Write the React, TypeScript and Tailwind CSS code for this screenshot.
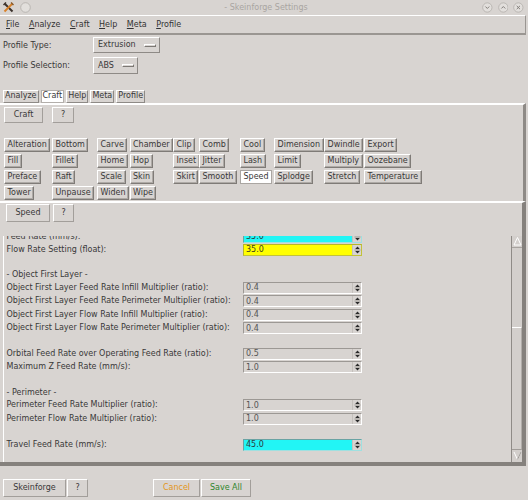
import React from "react";

type Row = {
  label?: string;
  value?: string;
  tone?: "cyan" | "yellow";
  kind: "entry" | "blank" | "heading";
};

const craftRows: string[][] = [
  ["Alteration", "Bottom", "Carve", "Chamber", "Clip", "Comb", "Cool", "Dimension", "Dwindle", "Export"],
  ["Fill", "Fillet", "Home", "Hop", "Inset", "Jitter", "Lash", "Limit", "Multiply", "Oozebane"],
  ["Preface", "Raft", "Scale", "Skin", "Skirt", "Smooth", "Speed", "Splodge", "Stretch", "Temperature"],
  ["Tower", "Unpause", "Widen", "Wipe"],
];

const rows: Row[] = [
  { kind: "entry", label: "Feed Rate (mm/s):", value: "35.0", tone: "cyan" },
  { kind: "entry", label: "Flow Rate Setting (float):", value: "35.0", tone: "yellow" },
  { kind: "blank" },
  { kind: "heading", label: "- Object First Layer -" },
  { kind: "entry", label: "Object First Layer Feed Rate Infill Multiplier (ratio):", value: "0.4" },
  { kind: "entry", label: "Object First Layer Feed Rate Perimeter Multiplier (ratio):", value: "0.4" },
  { kind: "entry", label: "Object First Layer Flow Rate Infill Multiplier (ratio):", value: "0.4" },
  { kind: "entry", label: "Object First Layer Flow Rate Perimeter Multiplier (ratio):", value: "0.4" },
  { kind: "blank" },
  { kind: "entry", label: "Orbital Feed Rate over Operating Feed Rate (ratio):", value: "0.5" },
  { kind: "entry", label: "Maximum Z Feed Rate (mm/s):", value: "1.0" },
  { kind: "blank" },
  { kind: "heading", label: "- Perimeter -" },
  { kind: "entry", label: "Perimeter Feed Rate Multiplier (ratio):", value: "1.0" },
  { kind: "entry", label: "Perimeter Flow Rate Multiplier (ratio):", value: "1.0" },
  { kind: "blank" },
  { kind: "entry", label: "Travel Feed Rate (mm/s):", value: "45.0", tone: "cyan" },
];

function ToolIcon() {
  return (
    <svg width="11" height="11" viewBox="0 0 11 11">
      <path d="M2 2 L9.5 9.5" stroke="#3a302a" strokeWidth="2" />
      <path d="M9 2 L1.5 9.5" stroke="#d9822b" strokeWidth="2" />
      <path d="M0.5 3 L3 0.5" stroke="#3a302a" strokeWidth="1.5" />
      <path d="M8 0.5 L10.5 3" stroke="#8a5a2a" strokeWidth="1.5" />
    </svg>
  );
}

function WinDot({ glyph }: { glyph?: "min" | "max" | "close" }) {
  return (
    <svg width="11" height="11" viewBox="0 0 11 11">
      <circle cx="5.5" cy="5.5" r="4.8" fill="#e2dfdc" stroke="#b1ada9" strokeWidth="0.8" />
      {glyph === "min" && <path d="M3.5 4.5 L5.5 6.5 L7.5 4.5" stroke="#807c78" strokeWidth="1" fill="none" />}
      {glyph === "max" && <path d="M3.5 6.5 L5.5 4.5 L7.5 6.5" stroke="#807c78" strokeWidth="1" fill="none" />}
      {glyph === "close" && <path d="M3.8 3.8 L7.2 7.2 M7.2 3.8 L3.8 7.2" stroke="#807c78" strokeWidth="1" />}
    </svg>
  );
}

function Spin() {
  return (
    <div className="w-[9px] h-full border-l border-l-[#c4c0bc] bg-[#d8d4d1] flex items-center justify-center shrink-0">
      <svg width="7" height="10" viewBox="0 0 7 10">
        <path d="M1.2 4 L3.5 1.6 L5.8 4 Z" fill="#2a2a2a" />
        <path d="M0.5 5 H6.5" stroke="#8a8682" strokeWidth="0.8" />
        <path d="M1.2 6 L5.8 6 L3.5 8.4 Z" fill="#2a2a2a" />
      </svg>
    </div>
  );
}

function Entry({ value, tone }: { value: string; tone?: "cyan" | "yellow" }) {
  let box = "bg-[#d8d4d1] border-t-[#9c9894] border-l-[#9c9894] border-b-white border-r-white text-[#555]";
  if (tone === "cyan") box = "bg-[#22f5f5] border-t-[#6aa3a3] border-l-[#6aa3a3] border-b-[#9fe0e0] border-r-[#9fe0e0] text-[#2d3a3a]";
  if (tone === "yellow") box = "bg-[#ffff00] border-t-[#b5b52a] border-l-[#b5b52a] border-b-[#c2c23a] border-r-[#c2c23a] text-[#3a3a20]";
  return (
    <div className={"w-[119px] h-[12px] border flex items-center " + box}>
      <span className="flex-1 pl-[2px] pt-[1px]">{value}</span>
      <Spin />
    </div>
  );
}

function Scrollbar() {
  return (
    <div className="w-[11px] flex flex-col border-l border-l-[#8f8b87] bg-[#d3cfcc] shrink-0">
      <div className="h-[12px] border-b border-b-[#a7a39f] flex items-end justify-center pb-[1px]">
        <svg width="9" height="10" viewBox="0 0 9 10">
          <path d="M1 9 L4.5 1.5 L8 9 Z" fill="none" stroke="#ffffff" strokeWidth="1" />
        </svg>
      </div>
      <div className="h-[79px]" />
      <div className="flex-1 border-t border-t-white border-b border-b-[#a09c98] border-r border-r-[#b0aca8]" />
      <div className="h-[12px] flex items-start justify-center pt-[1px]">
        <svg width="9" height="10" viewBox="0 0 9 10">
          <path d="M1 1 L4.5 8.5 L8 1" fill="none" stroke="#ffffff" strokeWidth="1" />
          <path d="M4.5 8.5 L8 1" fill="none" stroke="#9a9692" strokeWidth="1" />
        </svg>
      </div>
    </div>
  );
}

export default function App() {
  return (
    <div className="w-[528px] h-[500px] overflow-hidden bg-[#d8d4d1] text-[8px] leading-none text-[#383838] font-['DejaVu_Sans',sans-serif] flex flex-col">

      {/* title bar */}
      <div className="h-[15px] flex items-center shrink-0">
        <div className="w-[46px] flex items-center gap-[6px] pl-[3px]">
          <ToolIcon />
          <WinDot />
        </div>
        <div className="flex-1 text-center text-[#a9a5a1] pl-[4px]">- Skeinforge Settings</div>
        <div className="w-[46px] flex items-center justify-end gap-[5px] pr-[4px]">
          <WinDot glyph="min" />
          <WinDot glyph="max" />
          <WinDot glyph="close" />
        </div>
      </div>

      {/* menu bar */}
      <div className="h-[20px] w-[526px] border-t border-t-white border-b-2 border-b-[#9a9692] border-r border-r-[#9a9692] flex items-center pl-[6px] gap-[9.5px] text-[#333] shrink-0">
        {["File", "Analyze", "Craft", "Help", "Meta", "Profile"].map((m) => (
          <span key={m}>
            <span className="underline underline-offset-[1px]">{m[0]}</span>
            {m.slice(1)}
          </span>
        ))}
      </div>

      {/* profile selectors */}
      <div className="pl-[3px] pt-[2px] flex flex-col gap-[4px] shrink-0">
        <div className="flex items-center h-[16px]">
          <span className="w-[90px] pt-[1px]">Profile Type:</span>
          <div className="h-full flex items-center pl-[4px] pr-[3px] border border-t-white border-l-white border-b-[#8e8a86] border-r-[#8e8a86]">
            <span>Extrusion</span>
            <span className="ml-[8px] w-[12px] h-[3px] border border-t-white border-l-white border-b-[#7c7874] border-r-[#7c7874]" />
          </div>
        </div>
        <div className="flex items-center h-[17px]">
          <span className="w-[90px] pt-[1px]">Profile Selection:</span>
          <div className="h-full flex items-center pl-[4px] pr-[3px] border border-t-white border-l-white border-b-[#8e8a86] border-r-[#8e8a86]">
            <span>ABS</span>
            <span className="ml-[8px] w-[12px] h-[3px] border border-t-white border-l-white border-b-[#7c7874] border-r-[#7c7874]" />
          </div>
        </div>
      </div>

      {/* tabs */}
      <div className="mt-[16px] h-[13px] pl-[3px] flex gap-[2px] shrink-0">
        {["Analyze", "Craft", "Help", "Meta", "Profile"].map((t) => (
          <div
            key={t}
            className={
              t === "Craft"
                ? "h-[12.5px] px-[1px] flex items-center border border-[#b3afab] bg-white"
                : "h-[12.5px] px-[1px] flex items-center border border-t-white border-l-white border-b-[#8e8a86] border-r-[#8e8a86]"
            }
          >
            {t}
          </div>
        ))}
      </div>

      {/* craft frame */}
      <div className="h-[98px] w-[526px] border-t-2 border-t-white border-r-[3px] border-r-[#8e8a86] pl-[4px] pt-[2px] shrink-0">
        <div className="flex h-[16px]">
          <div className="w-[39px] h-full flex items-center justify-center border border-t-white border-l-white border-b-[#a29e9a] border-r-[#a29e9a]">Craft</div>
          <div className="ml-[9px] w-[22px] h-full flex items-center justify-center border border-t-white border-l-white border-b-[#a29e9a] border-r-[#a29e9a]">?</div>
        </div>
        <div className="mt-[14.5px] grid grid-cols-[48px_45px_32.5px_43.5px_26px_41px_34px_50px_40px_auto] gap-y-[2px] justify-items-start">
          {craftRows.map((r, ri) =>
            r.map((name) => (
              <div
                key={ri + name}
                className={
                  name === "Speed"
                    ? "h-[14px] px-[2.5px] flex items-center border border-[#aaa6a2] bg-white"
                    : "h-[14px] px-[2.5px] flex items-center border border-t-white border-l-white border-b-[#7f7b77] border-r-[#7f7b77] shadow-[inset_-1px_-1px_0_#aeaaa6]"
                }
              >
                {name}
              </div>
            ))
          )}
        </div>
      </div>

      {/* speed frame */}
      <div className="h-[265px] w-[526px] border-t-2 border-t-white border-r-4 border-r-[#85817d] border-b-4 border-b-[#85817d] flex flex-col shrink-0">
        <div className="flex pl-[6px] pt-[1px] h-[19px] shrink-0">
          <div className="w-[44px] h-[18px] flex items-center justify-center border border-t-white border-l-white border-b-[#a29e9a] border-r-[#a29e9a]">Speed</div>
          <div className="ml-[3px] w-[21px] h-[18px] flex items-center justify-center border border-t-white border-l-white border-b-[#a29e9a] border-r-[#a29e9a]">?</div>
        </div>
        <div className="mt-[13.5px] flex-1 min-h-0 flex pl-[3px]">
          <div className="flex-1 overflow-hidden border-l border-l-white pl-[2.5px]">
            <div className="-mt-[5.6px]">
              {rows.map((r, i) => {
                if (r.kind === "blank") return <div key={i} className="h-[12.5px]" />;
                if (r.kind === "heading")
                  return (
                    <div key={i} className="h-[12px] flex items-center whitespace-nowrap">
                      {r.label}
                    </div>
                  );
                return (
                  <div key={i} className="h-[13.4px] flex items-center">
                    <span className="w-[236.5px] whitespace-nowrap">{r.label}</span>
                    <Entry value={r.value ?? ""} tone={r.tone} />
                  </div>
                );
              })}
            </div>
          </div>
          <Scrollbar />
        </div>
      </div>

      {/* bottom buttons */}
      <div className="pt-[13px] flex pl-[3px] shrink-0">
        <div className="w-[63px] h-[18px] flex items-center justify-center border border-t-white border-l-white border-b-[#a29e9a] border-r-[#a29e9a]">Skeinforge</div>
        <div className="ml-[1px] w-[21px] h-[18px] flex items-center justify-center border border-t-white border-l-white border-b-[#a29e9a] border-r-[#a29e9a]">?</div>
        <div className="ml-[65px] w-[47px] h-[18px] flex items-center justify-center border border-t-white border-l-white border-b-[#a29e9a] border-r-[#a29e9a] text-[#e3961a]">Cancel</div>
        <div className="ml-[1px] w-[50px] h-[18px] flex items-center justify-center border border-t-white border-l-white border-b-[#a29e9a] border-r-[#a29e9a] text-[#2f852c]">Save All</div>
      </div>
    </div>
  );
}
